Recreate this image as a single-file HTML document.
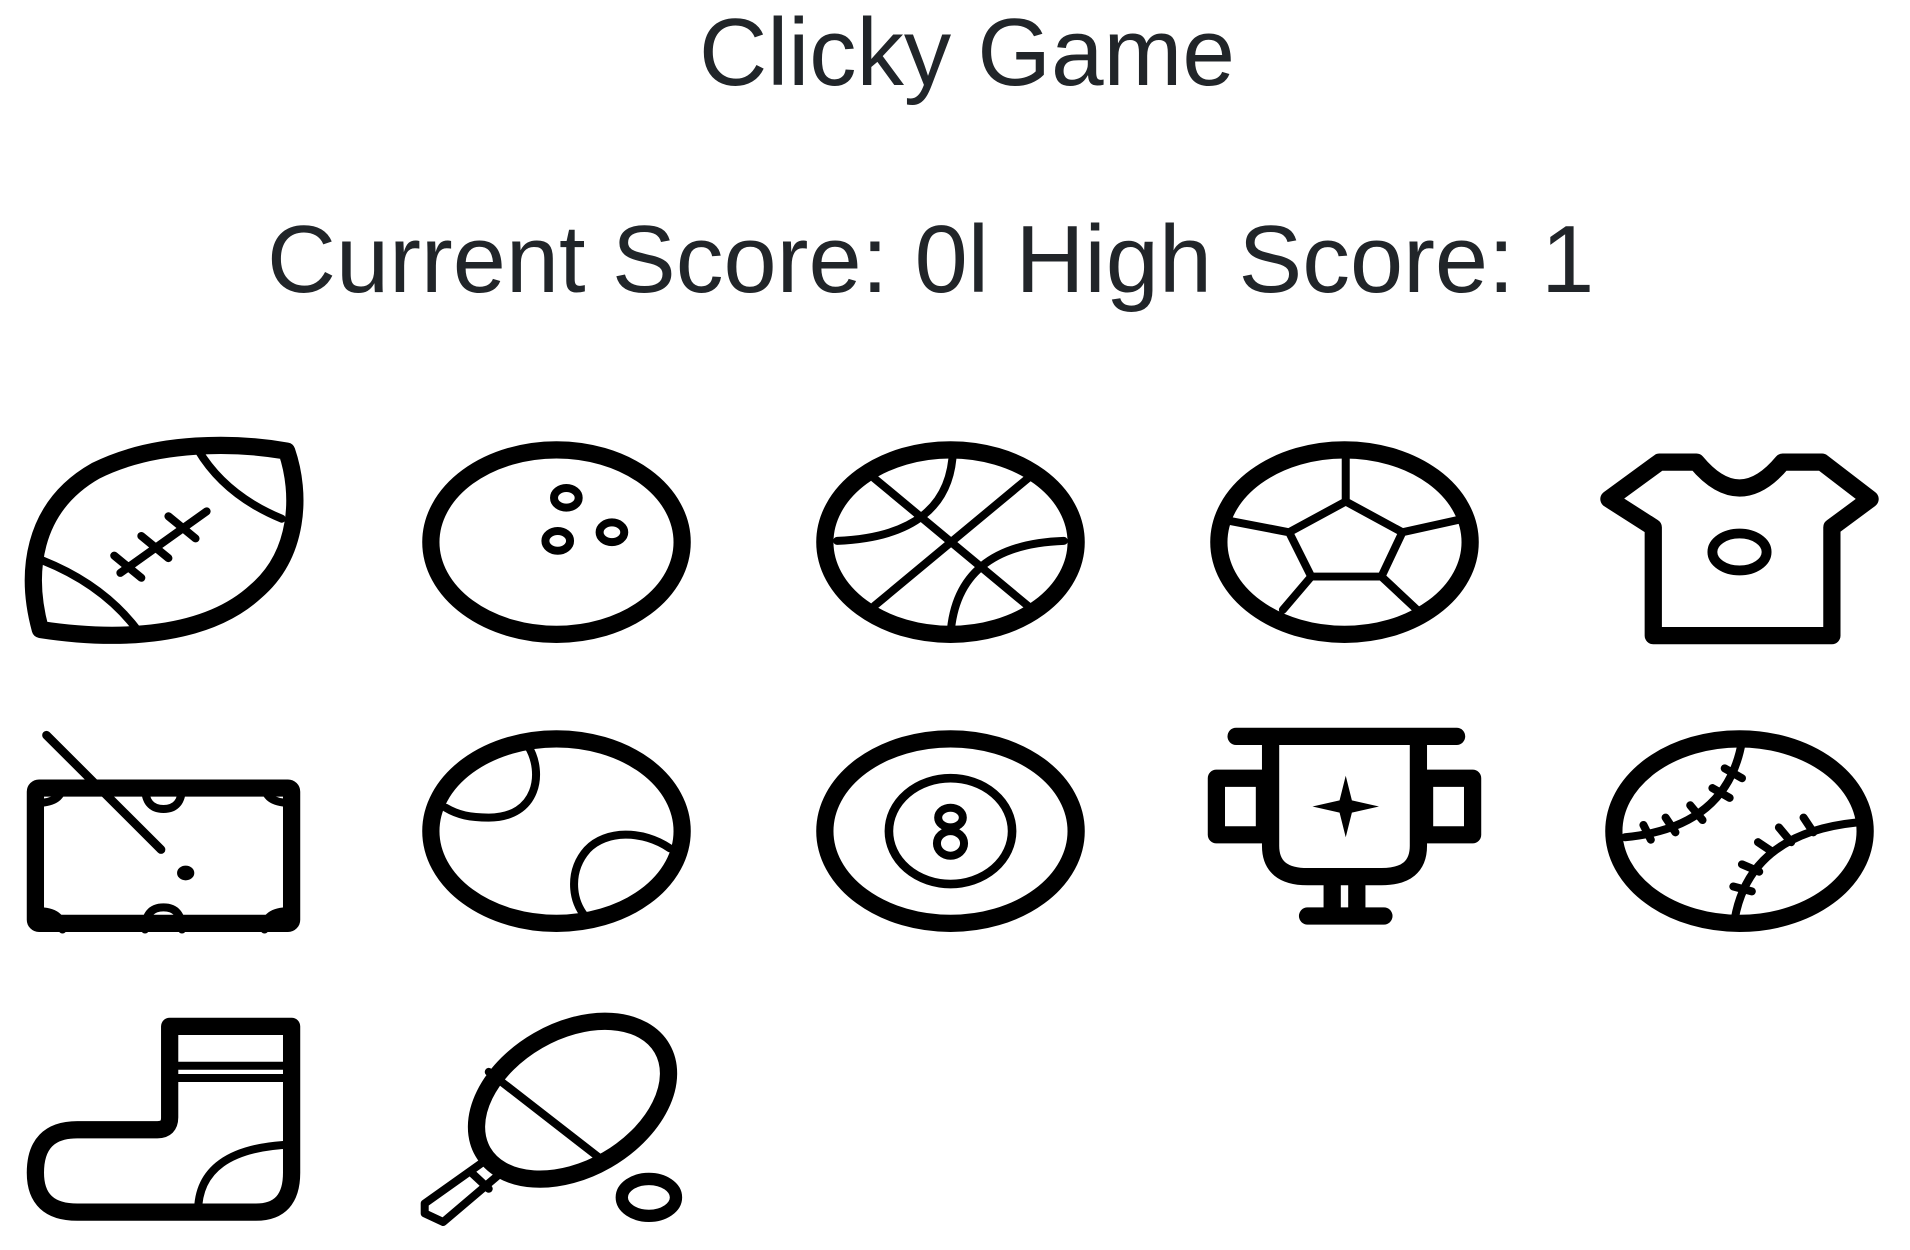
<!DOCTYPE html>
<html><head><meta charset="utf-8"><style>
html,body{margin:0;padding:0;background:#fff;width:1910px;height:1250px;overflow:hidden}
.t{position:absolute;font-family:"Liberation Sans",Arial,sans-serif;font-size:96px;line-height:96px;color:#212529;white-space:nowrap;margin:0;font-weight:normal;transform-origin:0 0}
.i{position:absolute;width:271px;height:203px}
svg{width:271px;height:203px;display:block;fill:none;stroke:#000;stroke-linecap:round;stroke-linejoin:round;overflow:visible}
.k{stroke-width:14}.n{stroke-width:6.5}
</style></head><body>
<div class="t" style="left:699px;top:5px;transform:scaleX(0.985)">Clicky Game</div>
<div class="t" style="left:267px;top:212px;transform:scaleX(0.995)">Current Score: 0l High Score: 1</div>

<div class="i" style="left:28px;top:440px"><svg viewBox="0 0 220 165" preserveAspectRatio="none">
<path class="k" d="M10,154 C-2,110 2,55 55,25 C105,0 170,2 210,9 C222,44 220,93 185,123 C145,160 75,164 10,154Z"/>
<path class="n" d="M138,8 Q160,45 206,64"/><path class="n" d="M12,98 Q62,118 90,156"/>
<path class="n" d="M75,108 L145,58 M70,94 L92,112 M92,78 L114,96 M114,62 L136,80"/></svg></div>

<div class="i" style="left:421px;top:440px"><svg viewBox="0 0 220 165" preserveAspectRatio="none">
<ellipse class="k" cx="110" cy="83" rx="102" ry="75"/>
<ellipse class="n" cx="118" cy="47" rx="10" ry="8"/><ellipse class="n" cx="111" cy="82" rx="10" ry="8"/><ellipse class="n" cx="155" cy="75" rx="10" ry="8"/></svg></div>

<div class="i" style="left:815px;top:440px"><svg viewBox="0 0 220 165" preserveAspectRatio="none">
<ellipse class="k" cx="110" cy="83" rx="102" ry="75"/>
<path class="n" d="M48,31 L173,135 M173,31 L48,135 M112,8 Q110,78 18,82 M202,82 Q115,85 110,158"/></svg></div>

<div class="i" style="left:1209px;top:440px"><svg viewBox="0 0 220 165" preserveAspectRatio="none">
<ellipse class="k" cx="110" cy="83" rx="102" ry="75"/>
<path class="n" d="M111,50 L157,75 L140,111 L83,111 L65,75Z M111,50 V8 M157,75 L202,65 M140,111 L171,140 M83,111 L60,138 M65,75 L18,66"/></svg></div>

<div class="i" style="left:1604px;top:440px"><svg viewBox="0 0 220 165" preserveAspectRatio="none">
<path class="k" d="M45,18 H75 Q110,60 145,18 H177 L216,48 L185,71 V159 H40 V71 L4,48Z"/>
<ellipse class="n" style="stroke-width:8" cx="110" cy="91" rx="22" ry="15"/></svg></div>

<div class="i" style="left:28px;top:729px"><svg viewBox="0 0 220 165" preserveAspectRatio="none">
<rect class="k" x="6" y="48" width="208" height="110" rx="3"/>
<path class="n" d="M8,60 Q28,60 28,45 M95,47 Q95,65 110,65 Q125,65 125,47 M192,45 Q192,60 212,60 M8,148 Q28,148 28,163 M95,163 Q95,145 110,145 Q125,145 125,163 M192,163 Q192,148 212,148"/>
<path class="n" style="stroke-width:7" d="M15,5 L108,98"/><ellipse cx="128" cy="117" rx="7" ry="6" fill="#000" stroke="none"/></svg></div>

<div class="i" style="left:421px;top:729px"><svg viewBox="0 0 220 165" preserveAspectRatio="none">
<ellipse class="k" cx="110" cy="83" rx="102" ry="75"/>
<path class="n" d="M87,14 C100,35 95,72 55,72 C40,72 30,70 20,64 M202,97 C180,82 150,82 135,98 C120,115 122,138 133,152"/></svg></div>

<div class="i" style="left:815px;top:729px"><svg viewBox="0 0 220 165" preserveAspectRatio="none">
<ellipse class="k" cx="110" cy="83" rx="102" ry="75"/>
<ellipse class="n" style="stroke-width:7" cx="110" cy="83" rx="50" ry="43"/>
<ellipse class="n" cx="110" cy="72" rx="10" ry="8"/><ellipse class="n" cx="110" cy="93" rx="11" ry="10"/></svg></div>

<div class="i" style="left:1209px;top:729px"><svg viewBox="0 0 220 165" preserveAspectRatio="none">
<path class="k" d="M22,6 H201"/>
<path class="k" d="M50,12 V95 Q50,120 80,120 H140 Q170,120 170,95 V12"/>
<rect class="k" x="6" y="40" width="39" height="46"/><rect class="k" x="175" y="40" width="39" height="46"/>
<path class="k" d="M100,123 V146 M120,123 V146 M80,152 H142"/>
<path d="M111,38 L116,58 L138,63 L116,68 L111,88 L106,68 L84,63 L106,58Z" fill="#000" stroke="none"/></svg></div>

<div class="i" style="left:1604px;top:729px"><svg viewBox="0 0 220 165" preserveAspectRatio="none">
<ellipse class="k" cx="110" cy="83" rx="102" ry="75"/>
<path class="n" d="M112,10 Q100,80 17,88 M205,76 Q118,85 106,155"/>
<path class="n" d="M98,32 L112,40 M88,48 L102,56 M70,62 L80,74 M50,72 L58,84 M32,78 L38,90 M162,72 L170,84 M142,80 L152,92 M125,92 L137,100 M112,110 L126,116 M105,128 L120,132"/></svg></div>

<div class="i" style="left:28px;top:1019px"><svg viewBox="0 0 220 165" preserveAspectRatio="none">
<path class="k" d="M115,6 H214 V125 Q214,157 185,157 H40 Q6,157 6,125 Q6,90 40,90 H105 Q115,90 115,80Z"/>
<path class="n" d="M115,38 H214 M115,48 H214 M138,157 Q138,105 214,102"/></svg></div>

<div class="i" style="left:421px;top:1019px"><svg viewBox="0 0 220 165" preserveAspectRatio="none">
<ellipse class="k" cx="123" cy="66" rx="84" ry="56" transform="rotate(-30 123 66)"/>
<path class="n" d="M55,43 L145,113"/>
<path class="n" d="M55,113 L3,150 L3,158 L18,165 L65,125 Z M40,124 L55,138"/>
<ellipse class="k" style="stroke-width:10" cx="185" cy="145" rx="22" ry="15"/></svg></div>
</body></html>
